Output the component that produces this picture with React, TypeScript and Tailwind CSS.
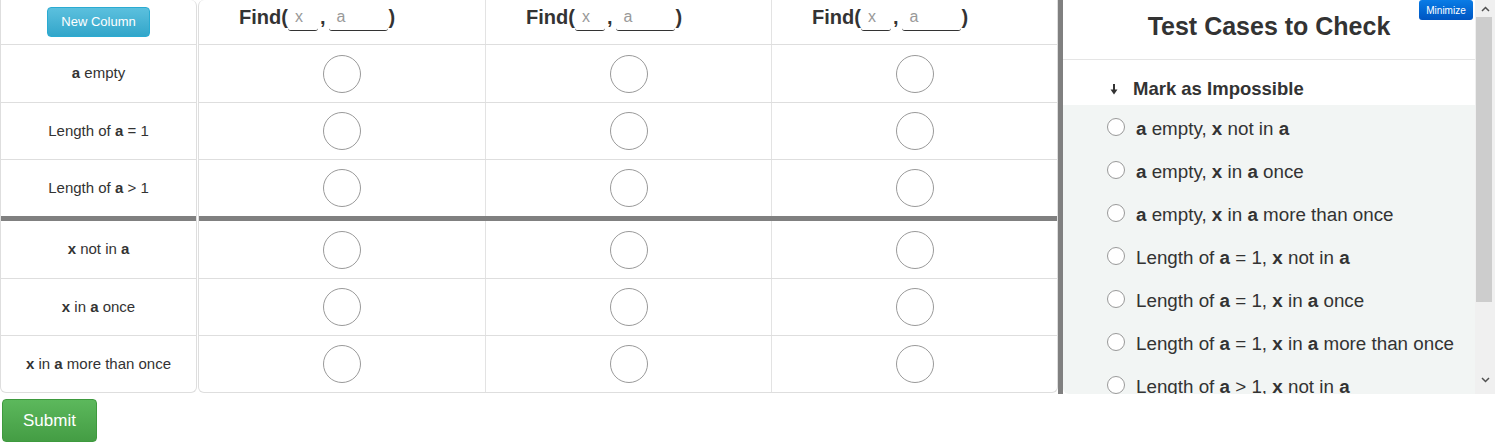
import React from "react";

const FONT = { fontFamily: "'Liberation Sans', Arial, Helvetica, sans-serif" };

const labels: React.ReactNode[] = [
  <><b>a</b> empty</>,
  <>Length of <b>a</b> = 1</>,
  <>Length of <b>a</b> &gt; 1</>,
  <><b>x</b> not in <b>a</b></>,
  <><b>x</b> in <b>a</b> once</>,
  <><b>x</b> in <b>a</b> more than once</>,
];

const cases: React.ReactNode[] = [
  <><b>a</b> empty, <b>x</b> not in <b>a</b></>,
  <><b>a</b> empty, <b>x</b> in <b>a</b> once</>,
  <><b>a</b> empty, <b>x</b> in <b>a</b> more than once</>,
  <>Length of <b>a</b> = 1, <b>x</b> not in <b>a</b></>,
  <>Length of <b>a</b> = 1, <b>x</b> in <b>a</b> once</>,
  <>Length of <b>a</b> = 1, <b>x</b> in <b>a</b> more than once</>,
  <>Length of <b>a</b> &gt; 1, <b>x</b> not in <b>a</b></>,
];

function Row({ idx, children }: { idx: number; children: React.ReactNode }) {
  const cls =
    idx === 3
      ? "border-t-[5px] border-[#808080] h-[62px]"
      : idx === 0
      ? "h-[57px]"
      : "border-t border-[#dedede] h-[57px]";
  return <div className={`flex items-center shrink-0 ${cls}`}>{children}</div>;
}

function Circle() {
  return <div className="w-[38px] h-[38px] rounded-full border border-[#9a9a9a] bg-white" />;
}

function FindHeader() {
  return (
    <div className="flex items-end pl-10 pt-[2px] text-[20px] font-bold text-[#333]">
      <span>Find(</span>
      <span className="w-[30px] h-[25px] border-b border-[#333] rounded-b-[3px] text-[16px] font-normal text-[#999] pl-[7px] leading-[22px] mb-[1px]">
        x
      </span>
      <span className="ml-[2px] mr-[4px]">,</span>
      <span className="w-[59px] h-[25px] border-b border-[#333] rounded-b-[3px] text-[16px] font-normal text-[#999] pl-[7px] leading-[22px] mb-[1px]">
        a
      </span>
      <span>)</span>
    </div>
  );
}

export default function App() {
  return (
    <div className="flex w-[1495px] h-[444px] bg-white text-[#333]" style={FONT}>
      <div className="flex flex-col w-[1058px]">
        <div className="flex h-[393px]">
          {/* label column */}
          <div className="w-[197px] border border-t-0 border-[#dedede] rounded-b-[6px] rounded-tr-[6px] flex flex-col">
            <div className="h-[45px] shrink-0 border-b border-[#dedede] flex items-start justify-center pt-[7px]">
              <button className="w-[103px] h-[30px] rounded-[4px] text-white text-[13px] border border-[#2aabd2] bg-gradient-to-b from-[#5bc0de] to-[#31a6ca]">
                New Column
              </button>
            </div>
            {labels.map((l, i) => (
              <Row key={i} idx={i}>
                <div className="w-full text-center text-[15px]">{l}</div>
              </Row>
            ))}
          </div>
          {/* grid */}
          <div className="flex-1 ml-[1px] border border-t-0 border-[#dedede] rounded-b-[6px] rounded-tl-[6px] flex flex-col">
            <div className="h-[45px] shrink-0 border-b border-[#dedede] grid grid-cols-3">
              {[0, 1, 2].map((c) => (
                <div key={c} className={c > 0 ? "border-l border-[#e3e3e3]" : ""}>
                  <FindHeader />
                </div>
              ))}
            </div>
            {labels.map((_, i) => (
              <Row key={i} idx={i}>
                <div className="grid grid-cols-3 w-full h-full">
                  {[0, 1, 2].map((c) => (
                    <div key={c} className={`flex items-center justify-center ${c > 0 ? "border-l border-[#e3e3e3]" : ""}`}>
                      <Circle />
                    </div>
                  ))}
                </div>
              </Row>
            ))}
          </div>
        </div>
        <div className="pl-[2px] pt-[6px]">
          <button className="w-[95px] h-[43px] rounded-[4px] text-white text-[17px] border border-[#3e9a3e] bg-gradient-to-b from-[#5cb85c] to-[#449d44]">
            Submit
          </button>
        </div>
      </div>
      {/* divider */}
      <div className="w-[5px] h-[394px] bg-[#808080]" />
      {/* right panel */}
      <div className="relative w-[412px] h-[394px] overflow-hidden rounded-bl-[6px] flex flex-col">
        <div className="h-[60px] shrink-0 border-b border-[#e5e5e5] flex items-center justify-center pb-[6px]">
          <h2 className="text-[25px] font-bold text-[#333]">Test Cases to Check</h2>
        </div>
        <div className="h-[45px] shrink-0 flex items-center pl-[47px] pt-[12px] text-[18.5px] font-bold">
          <svg width="8" height="11" viewBox="0 0 8 11" className="mr-[15px] mt-[2px]">
            <rect x="3" y="0" width="2" height="6" fill="#333" />
            <path d="M0.5 5.5 L7.5 5.5 L4 10.5 Z" fill="#333" />
          </svg>
          <span>Mark as Impossible</span>
        </div>
        <div className="flex-1 bg-[#f2f5f4] pt-[3px]">
          {cases.map((c, i) => (
            <div key={i} className="h-[43px] shrink-0 flex items-center pl-[44px] text-[18.8px]">
              <div className="w-[18px] h-[18px] shrink-0 rounded-full border border-[#999] bg-white mr-[11px] -mt-[6px]" />
              <span className="whitespace-nowrap">{c}</span>
            </div>
          ))}
        </div>
        <button className="absolute right-[2px] top-0 w-[54px] h-[20px] rounded-[3px] text-white text-[10px] bg-gradient-to-b from-[#0a7ce6] to-[#0055c2]">
          Minimize
        </button>
      </div>
      {/* scrollbar */}
      <div className="w-[20px] h-[394px] bg-[#f0f0f0] flex flex-col">
        <div className="h-[17px] flex items-center justify-center">
          <svg width="9" height="6" viewBox="0 0 9 6"><path d="M1 5 L4.5 1.5 L8 5" fill="none" stroke="#505050" strokeWidth="1.5" /></svg>
        </div>
        <div className="ml-[1px] mr-[3px] h-[285px] bg-[#cdcdcd]" />
        <div className="flex-1" />
        <div className="h-[17px] flex items-center justify-center mb-[6px]">
          <svg width="9" height="6" viewBox="0 0 9 6"><path d="M1 1 L4.5 4.5 L8 1" fill="none" stroke="#505050" strokeWidth="1.5" /></svg>
        </div>
      </div>
    </div>
  );
}
